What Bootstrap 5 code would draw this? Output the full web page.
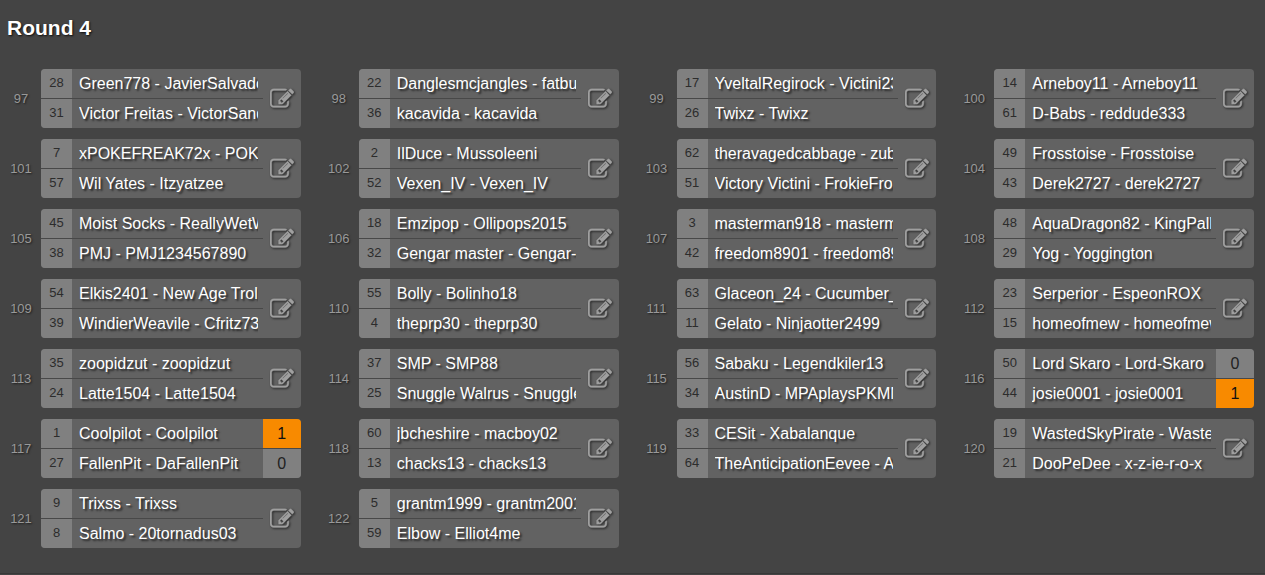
<!DOCTYPE html>
<html lang="en">
<head>
<meta charset="utf-8">
<meta name="viewport" content="width=device-width, initial-scale=1">
<title>Round 4</title>
<link href="https://cdn.jsdelivr.net/npm/bootstrap@5.3.0/dist/css/bootstrap.min.css" rel="stylesheet">
<style>
  body { background: #444; color: #fff; font-family: "Liberation Sans", Arial, sans-serif; }
  .round-title { font-size: 21px; line-height: 24px; padding: 16px 7px 29px; text-shadow: 1px 1px 2px rgba(0,0,0,.8); }
  .bracket { display: grid; grid-template-columns: repeat(auto-fill, minmax(280px, 1fr)); gap: 11px 17px; padding: 0 11px 25px 0; border-bottom: 1px solid #383838; }
  .match-no { flex: 0 0 41px; padding-left: 1px; font-size: 13px; color: #999; text-shadow: 1px 1px 2px rgba(0,0,0,.6); }
  .match-box { min-width: 0; background: #626262; border-radius: 4px; }
  .player { height: 29px; }
  .player + .player { border-top: 1px solid #484848; height: 30px; }
  .seed { flex: 0 0 31px; background: #808080; color: #2c2c2c; font-size: 13px; line-height: 28px; }
  .player-name { font-size: 16px; line-height: 29px; margin: 0 5px 0 7px; white-space: nowrap; text-shadow: 2px 2px 2px rgba(0,0,0,.6); }
  .side { flex: 0 0 38px; }
  .score { background: #808080; color: #222; font-size: 16px; height: 29px; line-height: 30px; }
  .score + .score { border-top: 1px solid #484848; height: 30px; }
  .score.winner { background: #f88a00; color: #111; }
  .edit-btn { color: #a0a0a0; }
  .edit-btn svg { display: block; filter: drop-shadow(1px 1px 1px rgba(0,0,0,.65)); }
</style>
</head>
<body>
<svg class="d-none" aria-hidden="true">
  <symbol id="edit" viewBox="0 0 1792 1792"><path fill="currentColor" stroke="currentColor" stroke-width="24" d="M888 1184l116-116-152-152-116 116v56h96v96h56zm440-720q-16-16-33 1l-350 350q-17 17-1 33t33-1l350-350q17-17 1-33zm80 594v190q0 119-84.500 203.500t-203.500 84.500h-832q-119 0-203.500-84.500t-84.500-203.500v-832q0-119 84.500-203.500t203.500-84.500h832q63 0 117 25 15 7 18 23 3 17-9 29l-49 49q-14 14-32 8-23-6-45-6h-832q-66 0-113 47t-47 113v832q0 66 47 113t113 47h832q66 0 113-47t47-113v-126q0-13 9-22l64-64q15-15 35-7t20 29zm-96-738l288 288-672 672h-288v-288zm444 132l-92 92-288-288 92-92q28-28 68-28t68 28l152 152q28 28 28 68t-28 68z"/></symbol>
</svg>
<main>
  <h1 class="round-title fw-bold mb-0">Round 4</h1>
  <div class="bracket" id="bracket"></div>
</main>
<script src="https://cdn.jsdelivr.net/npm/bootstrap@5.3.0/dist/js/bootstrap.bundle.min.js"></script>
<script>
  // Each match: seed, name, seed, name, and the two scores once played
  const matches = [
    [28, "Green778 - JavierSalvador", 31, "Victor Freitas - VictorSand"],
    [22, "Danglesmcjangles - fatbub", 36, "kacavida - kacavida"],
    [17, "YveltalRegirock - Victini230", 26, "Twixz - Twixz"],
    [14, "Arneboy11 - Arneboy11", 61, "D-Babs - reddude333"],
    [7, "xPOKEFREAK72x - POKE", 57, "Wil Yates - Itzyatzee"],
    [2, "IlDuce - Mussoleeni", 52, "Vexen_IV - Vexen_IV"],
    [62, "theravagedcabbage - zub", 51, "Victory Victini - FrokieFro"],
    [49, "Frosstoise - Frosstoise", 43, "Derek2727 - derek2727"],
    [45, "Moist Socks - ReallyWetW", 38, "PMJ - PMJ1234567890"],
    [18, "Emzipop - Ollipops2015", 32, "Gengar master - Gengar-1"],
    [3, "masterman918 - masterm", 42, "freedom8901 - freedom89"],
    [48, "AquaDragon82 - KingPalk", 29, "Yog - Yoggington"],
    [54, "Elkis2401 - New Age Trolle", 39, "WindierWeavile - Cfritz739"],
    [55, "Bolly - Bolinho18", 4, "theprp30 - theprp30"],
    [63, "Glaceon_24 - Cucumber_", 11, "Gelato - Ninjaotter2499"],
    [23, "Serperior - EspeonROX", 15, "homeofmew - homeofmew"],
    [35, "zoopidzut - zoopidzut", 24, "Latte1504 - Latte1504"],
    [37, "SMP - SMP88", 25, "Snuggle Walrus - Snuggle"],
    [56, "Sabaku - Legendkiler13", 34, "AustinD - MPAplaysPKMN"],
    [50, "Lord Skaro - Lord-Skaro", 44, "josie0001 - josie0001", 0, 1],
    [1, "Coolpilot - Coolpilot", 27, "FallenPit - DaFallenPit", 1, 0],
    [60, "jbcheshire - macboy02", 13, "chacks13 - chacks13"],
    [33, "CESit - Xabalanque", 64, "TheAnticipationEevee - Ab"],
    [19, "WastedSkyPirate - Wasted", 21, "DooPeDee - x-z-ie-r-o-x"],
    [9, "Trixss - Trixss", 8, "Salmo - 20tornadus03"],
    [5, "grantm1999 - grantm2001", 59, "Elbow - Elliot4me"]
  ];
  const player = (seed, name) => `
    <div class="player d-flex">
      <span class="seed text-center">${seed}</span>
      <span class="player-name flex-grow-1 overflow-hidden">${name}</span>
    </div>`;
  const score = (own, other) => `<div class="score text-center${own > other ? " winner" : ""}">${own}</div>`;
  document.getElementById("bracket").innerHTML = matches.map(([s1, n1, s2, n2, a, b], i) => `
    <section class="d-flex align-items-center">
      <span class="match-no text-center">${97 + i}</span>
      <div class="match-box d-flex flex-grow-1 overflow-hidden">
        <div class="flex-grow-1 overflow-hidden">${player(s1, n1)}${player(s2, n2)}</div>
        ${a === undefined
          ? `<button type="button" class="side edit-btn btn border-0 rounded-0 p-0 d-flex align-items-center justify-content-center" aria-label="Edit match ${97 + i}"><svg width="24" height="24" aria-hidden="true"><use href="#edit"/></svg></button>`
          : `<div class="side">${score(a, b)}${score(b, a)}</div>`}
      </div>
    </section>`).join("");
</script>
</body>
</html>
